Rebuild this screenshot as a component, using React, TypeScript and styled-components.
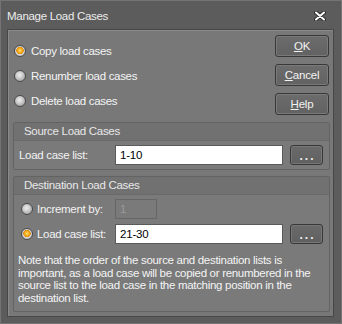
import React from "react";
import styled, { createGlobalStyle } from "styled-components";

const GlobalStyle = createGlobalStyle`
  html, body {
    margin: 0;
    padding: 0;
    background: #5c5c5c;
  }
  body {
    font-family: "Liberation Sans", Arial, sans-serif;
    font-size: 11.5px;
  }
`;

const App: React.FC = () => {
  return (
    <Window>
      <GlobalStyle />
      <TitleBar>
        <Title>Manage Load Cases</Title>
        <CloseIcon viewBox="0 0 12 10">
          <path d="M2 1.5 L10 8.5 M10 1.5 L2 8.5" stroke="#2e2e2e" strokeWidth="4" strokeLinecap="round" />
          <path d="M2 1.5 L10 8.5 M10 1.5 L2 8.5" stroke="#ffffff" strokeWidth="2" strokeLinecap="round" />
        </CloseIcon>
      </TitleBar>

      <Panel>
        <TopSection>
          <ModeList>
            <RadioRow>
              <Radio checked />
              <RadioLabel>Copy load cases</RadioLabel>
            </RadioRow>
            <RadioRow>
              <Radio />
              <RadioLabel>Renumber load cases</RadioLabel>
            </RadioRow>
            <RadioRow>
              <Radio />
              <RadioLabel>Delete load cases</RadioLabel>
            </RadioRow>
          </ModeList>
          <ButtonColumn>
            <DialogButton>
              <u>O</u>K
            </DialogButton>
            <DialogButton>
              <u>C</u>ancel
            </DialogButton>
            <DialogButton>
              <u>H</u>elp
            </DialogButton>
          </ButtonColumn>
        </TopSection>

        <Group>
          <GroupHeader>Source Load Cases</GroupHeader>
          <GroupBody>
            <FieldRow>
              <FieldLabel>Load case list:</FieldLabel>
              <TextInput value="1-10" readOnly />
              <BrowseButton>...</BrowseButton>
            </FieldRow>
          </GroupBody>
        </Group>

        <Group $grow>
          <GroupHeader>Destination Load Cases</GroupHeader>
          <GroupBody $indent>
            <FieldRow>
              <FieldLabel $radio>
                <Radio />
                <span>Increment by:</span>
              </FieldLabel>
              <SmallInput value="1" disabled />
            </FieldRow>
            <FieldRow>
              <FieldLabel $radio>
                <Radio checked />
                <span>Load case list:</span>
              </FieldLabel>
              <TextInput value="21-30" readOnly />
              <BrowseButton>...</BrowseButton>
            </FieldRow>
            <Note>
              Note that the order of the source and destination lists is
              <br />
              important, as a load case will be copied or renumbered in the
              <br />
              source list to the load case in the matching position in the
              <br />
              destination list.
            </Note>
          </GroupBody>
        </Group>
      </Panel>
    </Window>
  );
};

export default App;

const Window = styled.div`
  width: 342px;
  height: 324px;
  box-sizing: border-box;
  border: 1px solid #747474;
  background: #5c5c5c;
  display: flex;
  flex-direction: column;
  padding: 0 7px 6px 6px;
`;

const TitleBar = styled.div`
  height: 28px;
  display: flex;
  align-items: center;
  justify-content: space-between;
  padding-top: 2px;
  box-sizing: border-box;
`;

const Title = styled.div`
  color: #ececec;
  font-size: 11.5px;
  letter-spacing: -0.3px;
`;

const CloseIcon = styled.svg`
  width: 12px;
  height: 10px;
  margin-right: 8px;
`;

const Panel = styled.div`
  flex: 1;
  border: 1px solid #474747;
  box-shadow: inset 1px 1px 0 #8a8a8a;
  background: #787878;
  padding: 5px 3px 4px 5px;
  display: flex;
  flex-direction: column;
  gap: 6px;
`;

const TopSection = styled.div`
  display: flex;
  justify-content: space-between;
  margin-bottom: 1px;
`;

const ModeList = styled.div`
  display: flex;
  flex-direction: column;
  gap: 7px;
  padding: 7px 0 0 1px;
`;

const RadioRow = styled.div`
  display: flex;
  align-items: center;
  gap: 5px;
  height: 18px;
`;

const Radio = styled.span<{ checked?: boolean }>`
  width: 12px;
  height: 12px;
  box-sizing: border-box;
  border-radius: 50%;
  border: 1px solid #4a4a4a;
  background: ${({ checked }) =>
    checked
      ? "radial-gradient(circle at 50% 45%, #ffe070 0, #f5a515 2.5px, #d88a10 3.5px, #d8d8d8 4px, #b8b8b8 6px)"
      : "radial-gradient(circle at 45% 40%, #eeeeee 0, #cfcfcf 3px, #a8a8a8 6px)"};
  flex-shrink: 0;
  display: inline-block;
`;

const RadioLabel = styled.span`
  color: #f4f4f4;
  font-size: 11.5px;
  letter-spacing: -0.3px;
`;

const ButtonColumn = styled.div`
  display: flex;
  flex-direction: column;
  gap: 7px;
  margin-right: 1px;
`;

const DialogButton = styled.button`
  width: 54px;
  height: 22px;
  border: 1px solid #383838;
  border-radius: 3px;
  background: linear-gradient(#6c6c6c, #626262);
  box-shadow: inset 0 0 0 1px #7a7a7a;
  color: #f2f2f2;
  font-family: "Liberation Sans", Arial, sans-serif;
  font-size: 11.5px;
  letter-spacing: -0.2px;
  padding: 0;
  cursor: pointer;

  u {
    text-decoration: underline;
    text-underline-offset: 1px;
  }
`;

const Group = styled.div<{ $grow?: boolean }>`
  border: 1px solid #636363;
  border-radius: 2px;
  background: #7a7a7a;
  display: flex;
  flex-direction: column;
  flex: ${({ $grow }) => ($grow ? 1 : "none")};
`;

const GroupHeader = styled.div`
  height: 17px;
  line-height: 17px;
  background: #717171;
  border-bottom: 1px solid #6a6a6a;
  color: #e8e8e8;
  font-size: 11.5px;
  letter-spacing: -0.3px;
  padding-left: 10px;
`;

const GroupBody = styled.div<{ $indent?: boolean }>`
  display: flex;
  flex-direction: column;
  gap: 5px;
  padding: 4px 6px 4px ${({ $indent }) => ($indent ? "7px" : "5px")};
`;

const FieldRow = styled.div`
  display: flex;
  align-items: center;
  height: 20px;
`;

const FieldLabel = styled.label<{ $radio?: boolean }>`
  width: ${({ $radio }) => ($radio ? "94px" : "96px")};
  display: flex;
  align-items: center;
  gap: 4px;
  color: #f2f2f2;
  font-size: 11.5px;
  letter-spacing: -0.3px;
  flex-shrink: 0;
`;

const TextInput = styled.input`
  width: 168px;
  height: 20px;
  box-sizing: border-box;
  border: 1px solid #5a5a5a;
  background: #ffffff;
  color: #000000;
  font-family: "Liberation Sans", Arial, sans-serif;
  font-size: 11.5px;
  letter-spacing: -0.2px;
  padding: 0 4px;
  outline: none;
`;

const SmallInput = styled(TextInput)`
  width: 42px;
  background: #7a7a7a;
  border: 1px solid #666666;
  color: #9a9a9a;
`;

const BrowseButton = styled.button`
  width: 33px;
  height: 20px;
  margin-left: 7px;
  border: 1px solid #383838;
  border-radius: 3px;
  background: linear-gradient(#6a6a6a, #606060);
  box-shadow: inset 0 0 0 1px #777777;
  color: #f0f0f0;
  font-family: "Liberation Sans", Arial, sans-serif;
  font-size: 12px;
  font-weight: bold;
  letter-spacing: 2px;
  padding: 2px 0 0 2px;
  line-height: 1;
`;

const Note = styled.div`
  color: #f4f4f4;
  font-size: 11.5px;
  letter-spacing: -0.3px;
  line-height: 12.7px;
  margin: 5px 0 0 -3px;
  white-space: nowrap;
`;
